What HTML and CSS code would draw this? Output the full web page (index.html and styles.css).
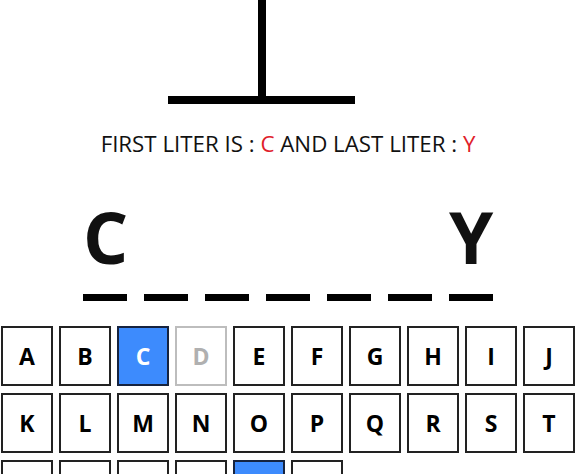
FILE: index.html
```html
<!DOCTYPE html>
<html lang="en">
<head>
<meta charset="UTF-8">
<meta name="viewport" content="width=device-width, initial-scale=1.0">
<title>Hangman</title>
<link rel="stylesheet" href="styles.css">
</head>
<body>
    <main class="game">
        <svg class="gallows" width="576" height="104" viewBox="0 0 576 104">
            <rect x="258" y="0" width="8" height="100" fill="#000"/>
            <rect x="168" y="96" width="187" height="8" fill="#000"/>
        </svg>

        <p class="hint">FIRST LITER IS : <span class="red">C</span> AND LAST LITER : <span class="red">Y</span></p>

        <div class="word" id="word"></div>

        <div class="keyboard" id="keyboard"></div>
    </main>
<script>
const word='CLOUDY';
const slots=['C','','','','','','Y'];
const found=['C','Y'];
const wrong=['D'];

const wordEl=document.getElementById('word');
for(const s of slots){
    const d=document.createElement('div');
    d.className='slot';
    d.textContent=s;
    wordEl.appendChild(d);
}

const kb=document.getElementById('keyboard');
for(const ch of 'ABCDEFGHIJKLMNOPQRSTUVWXYZ'){
    const b=document.createElement('button');
    b.className='key';
    if(found.includes(ch))b.classList.add('found');
    if(wrong.includes(ch)){b.classList.add('used');b.disabled=true;}
    b.textContent=ch;
    kb.appendChild(b);
}
</script>
</body>
</html>
```

FILE: styles.css
```css
body{
    margin:0;
    font-family:"Open Sans",Arial,sans-serif;
    color:#111;
    background:#fff;
}
.game{
    display:flex;
    flex-direction:column;
    align-items:center;
}
.gallows{
    display:block;
}
.hint{
    margin:25px 0 0;
    font-size:22.3px;
    line-height:30px;
}
.red{color:#e0202a;}
.word{
    display:flex;
    gap:17px;
    margin-top:42px;
}
.slot{
    width:44px;
    height:72px;
    padding-bottom:21px;
    border-bottom:7px solid #000;
    font-size:71px;
    line-height:72px;
    font-weight:700;
    text-align:center;
}
.keyboard{
    display:flex;
    flex-wrap:wrap;
    gap:7px 6px;
    width:574px;
    margin-top:25px;
}
.key{
    width:52px;
    height:60px;
    padding:0;
    border:2px solid #222;
    background:#fff;
    color:#000;
    font-family:"Open Sans",Arial,sans-serif;
    font-size:23px;
    font-weight:700;
    cursor:pointer;
}
.key.found{
    background:#3d8bfd;
    border-color:#16233f;
    color:#fff;
}
.key.used{
    border-color:#bdbdbd;
    color:#b0b0b0;
    cursor:default;
}
```
